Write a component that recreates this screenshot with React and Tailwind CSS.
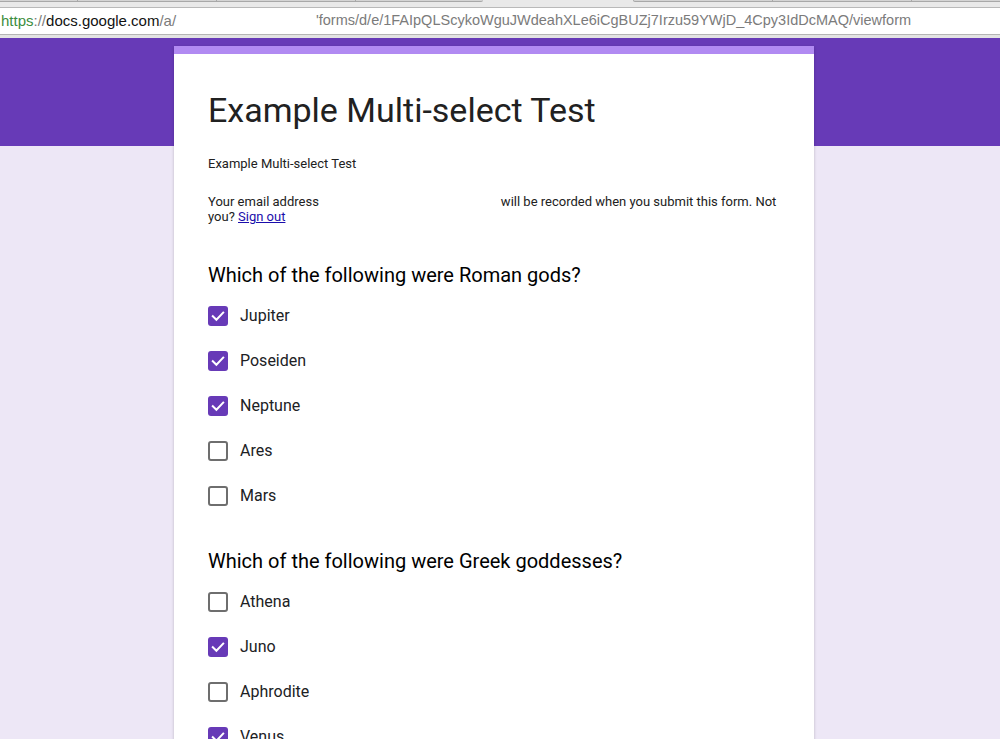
import React from "react";

function Check({ checked, label }) {
  return (
    <div className="flex items-center h-5">
      {checked ? (
        <div className="w-5 h-5 rounded-[3px] bg-[#673ab7] flex items-center justify-center">
          <svg width="20" height="20" viewBox="0 0 20 20">
            <polyline points="4.8,10.2 8.4,13.8 15.2,6.6" fill="none" stroke="#fff" strokeWidth="2" strokeLinecap="square" />
          </svg>
        </div>
      ) : (
        <div className="w-5 h-5 rounded-[3px] border-2 border-[#6e6e6e] bg-white" />
      )}
      <span className="ml-3 text-[16px] leading-5 text-[#202124]">{label}</span>
    </div>
  );
}

function Question({ title, options, className }) {
  return (
    <div className={className}>
      <div className="text-[20px] leading-6 text-[#000]">{title}</div>
      <div className="mt-[19px] flex flex-col gap-[25px]">
        {options.map(([l, c]) => (
          <Check key={l} label={l} checked={c} />
        ))}
      </div>
    </div>
  );
}

export default function App() {
  return (
    <div className="w-[1000px] h-[739px] overflow-hidden bg-[#ede7f6] flex flex-col" style={{ fontFamily: "Roboto, sans-serif" }}>
      {/* browser chrome */}
      <div className="h-[38px] shrink-0 flex flex-col bg-[#e6e6e6]">
        <div className="h-[7px] flex bg-[#e9e9e9]">
          <div className="w-[78px] h-[2px] border-r border-b border-[#a8a8a8] bg-[#d4d4d4]" />
          <div className="w-[139px] h-[2px] border-r border-b border-[#a8a8a8] bg-[#d4d4d4]" />
          <div className="w-[139px] h-[2px] border-r border-b border-[#a8a8a8] bg-[#d4d4d4]" />
          <div className="w-[127px] h-[2px] border-b border-[#a8a8a8] bg-[#d4d4d4] rounded-br-[3px]" />
          <div className="w-[150px]" />
          <div className="w-[140px] h-[2px] border-l border-r border-b border-[#a8a8a8] bg-[#d4d4d4] rounded-bl-[3px]" />
          <div className="w-[139px] h-[2px] border-r border-b border-[#a8a8a8] bg-[#d4d4d4]" />
          <div className="flex-1 h-[2px] border-b border-[#a8a8a8] bg-[#d4d4d4]" />
        </div>
        <div className="h-px bg-[#b9b9b9]" />
        <div className="h-[26px] bg-white flex items-center whitespace-nowrap" style={{ fontFamily: '"Liberation Sans", Arial, sans-serif' }}>
          <div className="w-[316px] pl-px text-[15px]">
            <span className="text-[#3c8d40]">https</span>
            <span className="text-[#7b7b7b]">://</span>
            <span className="text-[#111]">docs.google.com</span>
            <span className="text-[#7b7b7b]">/a/</span>
          </div>
          <div className="text-[14.5px] text-[#7b7b7b]">'forms/d/e/1FAIpQLScykoWguJWdeahXLe6iCgBUZj7Irzu59YWjD_4Cpy3IdDcMAQ/viewform</div>
        </div>
        <div className="h-px bg-[#b5b5b5]" />
        <div className="flex-1 bg-[#e3e3e3]" />
      </div>

      {/* page */}
      <div className="flex-1 bg-[linear-gradient(#673ab7_0px,#673ab7_108px,#ede7f6_108px)] flex pl-[174px] pt-2">
        <div className="w-[640px] h-[900px] bg-white border-t-[8px] border-[#b18af2] shadow-[0_1px_3px_rgba(0,0,0,0.2)] px-[34px] pt-[36px]">
          <div className="text-[34px] leading-10 text-[#212121]">Example Multi-select Test</div>
          <div className="mt-[26px] text-[13px] leading-[15px] text-[#212121]">Example Multi-select Test</div>
          <div className="mt-[23px] text-[13px] leading-[15px] text-[#212121]">
            Your email address<span className="inline-block w-[182px]" />will be recorded when you submit this form. Not you?{" "}
            <a className="text-[#1a0dab] underline" href="#">Sign out</a>
          </div>
          <Question
            className="mt-[39px]"
            title="Which of the following were Roman gods?"
            options={[["Jupiter", true], ["Poseiden", true], ["Neptune", true], ["Ares", false], ["Mars", false]]}
          />
          <Question
            className="mt-[43px]"
            title="Which of the following were Greek goddesses?"
            options={[["Athena", false], ["Juno", true], ["Aphrodite", false], ["Venus", true]]}
          />
        </div>
      </div>
    </div>
  );
}
